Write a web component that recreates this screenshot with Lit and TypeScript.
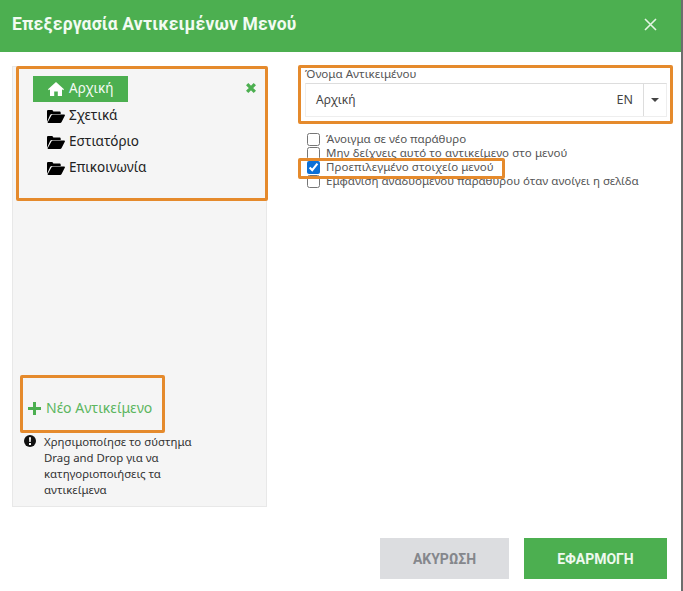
import { LitElement, html, css } from "lit";
import { customElement } from "lit/decorators.js";

const folder = html`<svg class="ficon" viewBox="0 0 18 14"><path d="M0 13V2.2C0 1.4.6 1 1.2 1h3.6c.6 0 1 .3 1.2.8l.3.7h6.2c.7 0 1.2.5 1.2 1.1V5H5c-.9 0-1.5.4-1.9 1.1L0 13zm1.4 1c-.6 0-.9-.4-.6-.9l3.6-6.6c.3-.6.8-.9 1.5-.9h11.3c.6 0 .9.4.7.9l-3.3 6.6c-.3.6-.8.9-1.5.9H1.4z"/></svg>`;

@customElement("app-root")
export class AppRoot extends LitElement {
  static styles = css`
    :host { display: block; width: 683px; height: 591px; position: relative; overflow: hidden; background: #fff; font-family: "Noto Sans", Roboto, sans-serif; color: #444; }
    .edge { position: absolute; right: 0; top: 0; bottom: 0; width: 2px; background: #6d6d6d; }
    .modal { width: 681px; height: 591px; display: flex; flex-direction: column; background: #fff; }
    .head { height: 52px; flex: none; background: #4caf50; color: #f2fbf2; display: flex; align-items: center; justify-content: space-between; padding: 0 24px 3px 12px; box-sizing: border-box; }
    .head h1 { margin: 0; font: 700 17.5px/1 Roboto, sans-serif; letter-spacing: .15px; }
    .close { width: 13px; height: 13px; display: block; }
    .body { flex: 1; display: flex; padding: 14px 14px 0 12px; gap: 38px; min-height: 0; }
    .left { width: 255px; height: 441px; box-sizing: border-box; background: #f5f5f5; border: 1px solid #e8e8e8; display: flex; flex-direction: column; padding: 9px 0 0 20px; flex: none; }
    .tree { display: flex; flex-direction: column; position: relative; }
    .item { height: 26px; box-sizing: border-box; display: flex; align-items: center; font: 13.5px/1 "Noto Sans", sans-serif; color: #222; padding: 2px 0 0 14px; gap: 4px; }
    .item.active { width: 95px; background: #4caf50; color: #f4fbf4; padding: 0 0 0 15px; gap: 5px; }
    .ficon { width: 18px; height: 14px; display: block; fill: #000; }
    .home { width: 16px; height: 14px; display: block; fill: #fff; }
    .remove { position: absolute; right: 9px; top: 6px; width: 12px; height: 12px; }
    .add { margin-top: 217px; margin-left: -5px; display: flex; align-items: center; gap: 5px; color: #5cb660; font: 14px/1 "Noto Sans", sans-serif; height: 22px; }
    .add svg { width: 13px; height: 13px; }
    .help { display: flex; gap: 8px; margin: 15px 0 0 -9px; font: 11.4px/16px "Noto Sans", sans-serif; color: #333; }
    .help svg { width: 12px; height: 12px; flex: none; margin-top: 1px; }
    .help p { margin: 0; width: 172px; }
    .right { flex: 1; display: flex; flex-direction: column; min-width: 0; }
    .lbl { font: 11.6px/14px "Noto Sans", sans-serif; color: #555; margin-top: 1px; height: 16px; }
    .field { height: 34px; display: flex; align-items: center; width: 362px; box-sizing: border-box; border: 1px solid #eee; border-top-color: #ddd; font: 12px/1 "Noto Sans", sans-serif; color: #444; }
    .val { flex: 1; padding-left: 10px; }
    .lang { padding-right: 10px; font-size: 12.5px; }
    .caret { width: 22px; height: 32px; border-left: 1px solid #ddd; display: flex; align-items: center; justify-content: center; flex: none; }
    .caret i { width: 0; height: 0; border: 4px solid transparent; border-top-color: #444; border-bottom: 0; }
    .checks { margin-top: 15px; display: flex; flex-direction: column; }
    .check { height: 14px; display: flex; align-items: center; gap: 6px; font: 11.5px/14px "Noto Sans", sans-serif; color: #555; white-space: nowrap; }
    .check.wide { letter-spacing: .1px; }
    .check input { width: 13px; height: 13px; margin: 0 0 0 2px; flex: none; accent-color: #0b6fd6; }
    .actions { margin-top: auto; display: flex; justify-content: flex-end; gap: 15px; padding-bottom: 12px; }
    .btn { height: 41px; border: 0; font: 700 14px/1 Roboto, sans-serif; padding: 0; display: flex; align-items: center; justify-content: center; }
    .cancel { width: 129px; background: #dcdde0; color: #85878c; }
    .apply { width: 143px; background: #4caf50; color: #eef9ee; }
    .mark { position: absolute; box-sizing: border-box; border: 3px solid #e58a2c; border-radius: 2px; pointer-events: none; }
    .m1 { left: 16px; top: 66px; width: 252px; height: 135px; }
    .m2 { left: 298px; top: 65px; width: 375px; height: 59px; }
    .m3 { left: 298px; top: 158px; width: 207px; height: 21px; }
    .m4 { left: 20px; top: 375px; width: 145px; height: 58px; }
  `;

  render() {
    return html`
      <div class="modal">
        <div class="head">
          <h1>Επεξεργασία Αντικειμένων Μενού</h1>
          <svg class="close" viewBox="0 0 13 13"><path d="M1 1l11 11M12 1L1 12" stroke="#e4f5e4" stroke-width="1.6" fill="none"/></svg>
        </div>
        <div class="body">
          <div class="left">
            <div class="tree">
              <div class="item active"><svg class="home" viewBox="0 0 16 14"><path d="M8 0l8 7.2-.9 1L14 7.3V14H9.8V9.5H6.2V14H2V7.3L.9 8.2 0 7.2z"/></svg>Αρχική</div>
              <div class="item">${folder}Σχετικά</div>
              <div class="item">${folder}Εστιατόριο</div>
              <div class="item">${folder}Επικοινωνία</div>
              <svg class="remove" viewBox="0 0 11 11"><path d="M2 2l7 7M9 2L2 9" stroke="#4caf50" stroke-width="3" fill="none"/></svg>
            </div>
            <div class="add"><svg viewBox="0 0 13 13"><path d="M5 0h3v5h5v3H8v5H5V8H0V5h5z" fill="#4caf50"/></svg>Νέο Αντικείμενο</div>
            <div class="help">
              <svg viewBox="0 0 12 12"><circle cx="6" cy="6" r="6" fill="#111"/><path d="M5 2.2h2L6.7 7H5.3zM5 8h2v2H5z" fill="#fff"/></svg>
              <p>Χρησιμοποίησε το σύστημα Drag and Drop για να κατηγοριοποιήσεις τα αντικείμενα</p>
            </div>
          </div>
          <div class="right">
            <div class="lbl">Όνομα Αντικειμένου</div>
            <div class="field"><span class="val">Αρχική</span><span class="lang">EN</span><span class="caret"><i></i></span></div>
            <div class="checks">
              <label class="check"><input type="checkbox" />Άνοιγμα σε νέο παράθυρο</label>
              <label class="check wide"><input type="checkbox" />Μην δείχνεις αυτό το αντικείμενο στο μενού</label>
              <label class="check wide"><input type="checkbox" checked />Προεπιλεγμένο στοιχείο μενού</label>
              <label class="check"><input type="checkbox" />Εμφάνιση αναδυόμενου παράθυρου όταν ανοίγει η σελίδα</label>
            </div>
            <div class="actions">
              <button class="btn cancel">ΑΚΥΡΩΣΗ</button>
              <button class="btn apply">ΕΦΑΡΜΟΓΗ</button>
            </div>
          </div>
        </div>
      </div>
      <div class="edge"></div>
      <div class="mark m1"></div>
      <div class="mark m2"></div>
      <div class="mark m3"></div>
      <div class="mark m4"></div>
    `;
  }
}
